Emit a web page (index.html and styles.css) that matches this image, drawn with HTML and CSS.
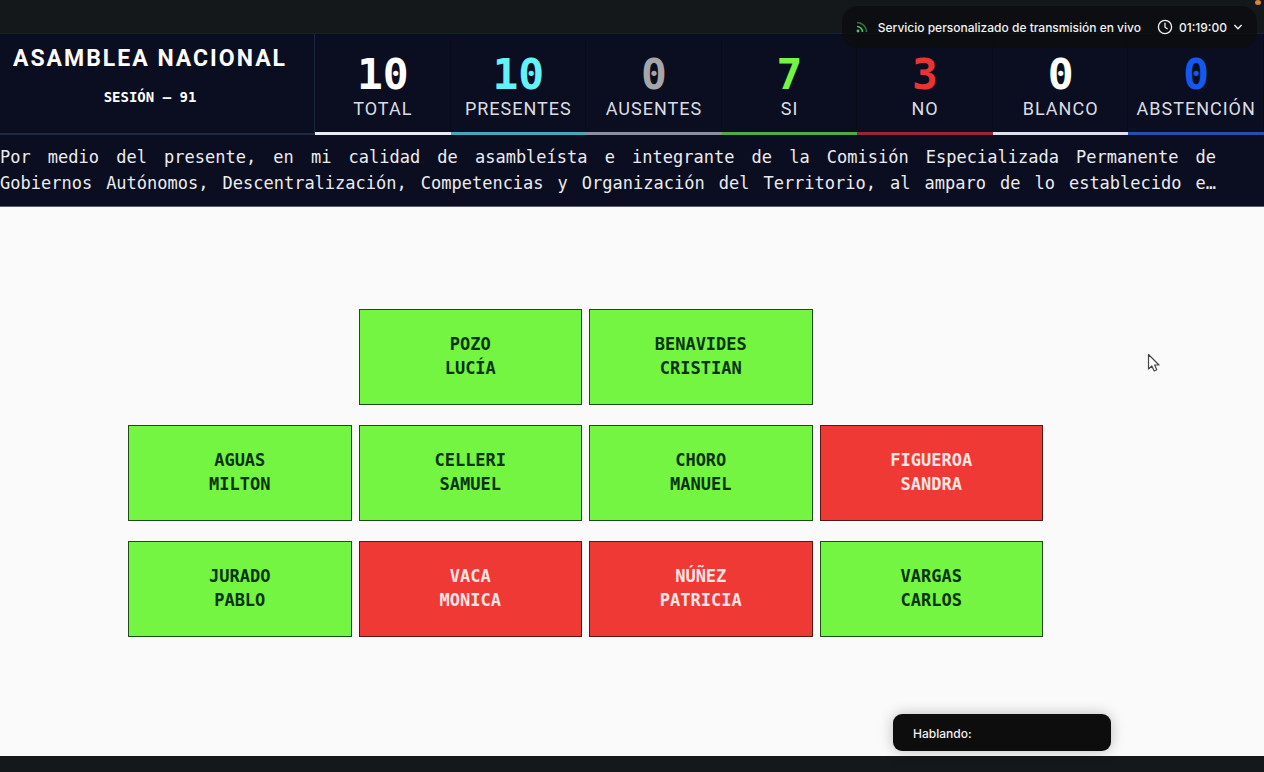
FILE: index.html
```
<!DOCTYPE html>
<html lang="es">

<head>
    <meta charset="UTF-8">
    <meta name="viewport" content="width=device-width, initial-scale=1.0">
    <title>Asamblea Nacional</title>
    <link rel="stylesheet" href="styles.css">
</head>

<body>
    <header class="header">
        <div class="top">
            <div class="title">
                <h1>ASAMBLEA NACIONAL</h1>
                <p class="session">SESIÓN – 91</p>
            </div>
            <dl class="counters">
                <div class="counter total">
                    <dt>TOTAL</dt>
                    <dd>10</dd>
                </div>
                <div class="counter present">
                    <dt>PRESENTES</dt>
                    <dd>10</dd>
                </div>
                <div class="counter absent">
                    <dt>AUSENTES</dt>
                    <dd>0</dd>
                </div>
                <div class="counter yes">
                    <dt>SI</dt>
                    <dd>7</dd>
                </div>
                <div class="counter no">
                    <dt>NO</dt>
                    <dd>3</dd>
                </div>
                <div class="counter blank">
                    <dt>BLANCO</dt>
                    <dd>0</dd>
                </div>
                <div class="counter abstention">
                    <dt>ABSTENCIÓN</dt>
                    <dd>0</dd>
                </div>
            </dl>
        </div>
        <p class="motion">
            <span class="line">Por medio del presente, en mi calidad de asambleísta e integrante de la Comisión Especializada Permanente de</span>
            <span class="line">Gobiernos Autónomos, Descentralización, Competencias y Organización del Territorio, al amparo de lo establecido e…</span>
        </p>
    </header>

    <main class="board">
        <div class="seats">
            <div class="seat second">POZO<br>LUCÍA</div>
            <div class="seat">BENAVIDES<br>CRISTIAN</div>
            <div class="seat first">AGUAS<br>MILTON</div>
            <div class="seat">CELLERI<br>SAMUEL</div>
            <div class="seat">CHORO<br>MANUEL</div>
            <div class="seat against">FIGUEROA<br>SANDRA</div>
            <div class="seat">JURADO<br>PABLO</div>
            <div class="seat against">VACA<br>MONICA</div>
            <div class="seat against">NÚÑEZ<br>PATRICIA</div>
            <div class="seat">VARGAS<br>CARLOS</div>
        </div>
    </main>

    <!-- meeting overlays -->
    <div class="live">
        <svg class="feed" width="12" height="12" viewBox="0 0 12 12" fill="none" stroke-width="1.5">
            <circle cx="2" cy="10" r="1.4" fill="#4fc26b" />
            <path d="M1 5.5A5.5 5.5 0 0 1 6.5 11" stroke="#4fc26b" />
            <path d="M1 1.5A9.5 9.5 0 0 1 10.5 11" stroke="#2b7a41" />
        </svg>
        <span class="service">Servicio personalizado de transmisión en vivo</span>
        <button class="timer" type="button">
            <svg width="16" height="16" viewBox="0 0 16 16" fill="none" stroke="currentColor" stroke-width="1.3">
                <circle cx="8" cy="8" r="6.6" />
                <path d="M8 3.8V8.2L10.6 10" />
            </svg>
            <span>01:19:00</span>
            <svg width="10" height="10" viewBox="0 0 10 10" fill="none" stroke="currentColor" stroke-width="1.4">
                <path d="M1.4 3L5 6.8L8.6 3" />
            </svg>
        </button>
    </div>
    <span class="mic"></span>
    <div class="speaking">Hablando:</div>
    <svg class="cursor" width="14" height="20" viewBox="0 0 14 20">
        <path d="M1.5 1.5V16L4.8 13L7.2 18L9.8 16.8L7.6 12H12Z" fill="#fff" stroke="#444" stroke-width="1.2" stroke-linejoin="round" />
    </svg>
</body>

</html>
```

FILE: styles.css
```
* {
    margin: 0;
    padding: 0;
    box-sizing: border-box;
}

body {
    position: relative;
    display: flex;
    flex-direction: column;
    min-height: 100vh;
    padding: 33px 0 16px;
    background-color: #14181b;
    font-family: "DejaVu Sans Mono", monospace;
}

.header {
    background-color: #0b0e20;
    color: #fff;
    border-top: 1px solid #14213a;
    border-bottom: 1px solid #5c6077;
}

.top {
    display: flex;
}

.title {
    flex: 0 0 315px;
    padding-top: 10px;
    border-right: 1px solid #1c2840;
    border-bottom: 2px solid #1d2b46;
    text-align: center;
}

.title h1 {
    font-family: Roboto, sans-serif;
    font-size: 23px;
    font-weight: 700;
    line-height: 30px;
    letter-spacing: 2px;
    white-space: nowrap;
    padding-right: 14px;
}

.session {
    margin-top: 13px;
    padding-right: 14px;
    font-size: 14px;
    font-weight: 700;
    line-height: 20px;
}

.counters {
    flex: 1;
    display: grid;
    grid-template-columns: repeat(7, minmax(0, 1fr));
}

.counter {
    display: flex;
    flex-direction: column-reverse;
    align-items: center;
    padding: 16px 0 12px;
    box-shadow: inset -1px 0 #090b19;
    border-bottom: 3px solid;
}

.counter dt {
    font-family: Roboto, sans-serif;
    font-size: 18px;
    line-height: 22px;
    letter-spacing: 1px;
    color: #dcdde3;
}

.counter dd {
    font-size: 43px;
    font-weight: 700;
    line-height: 48px;
}

.total {
    border-bottom-color: #e9eaf2;
}

.present {
    border-bottom-color: #45a9b9;
}

.present dd {
    color: #63f2f5;
}

.absent {
    border-bottom-color: #8b8f9e;
}

.absent dd {
    color: #a6a6aa;
}

.yes {
    border-bottom-color: #4fa945;
}

.yes dd {
    color: #74f541;
}

.no {
    border-bottom-color: #96273a;
}

.no dd {
    color: #ea3433;
}

.blank {
    border-bottom-color: #e0e1ed;
}

.abstention {
    border-bottom-color: #2450ad;
}

.abstention dd {
    color: #1458ee;
}

.motion {
    padding: 9px 48px 10px 0;
    font-size: 17px;
    line-height: 26px;
    color: #ebecef;
}

.line {
    display: block;
    text-align-last: justify;
    white-space: nowrap;
}

.board {
    flex: 1;
    padding: 102px 221px 0 128px;
    background-color: #fafafb;
}

.seats {
    display: grid;
    grid-template-columns: repeat(4, 1fr);
    gap: 20px 7px;
}

.seat {
    padding: 22px 0 24px;
    border: 1px solid #1d4d14;
    background-color: #74f541;
    color: #07330a;
    font-size: 17px;
    font-weight: 700;
    line-height: 24px;
    text-align: center;
}

.first {
    grid-column-start: 1;
}

.second {
    grid-column-start: 2;
}

.against {
    border-color: #5a1718;
    background-color: #ee3935;
    color: #ffe6e4;
}

.live {
    position: absolute;
    top: 6px;
    right: 7px;
    display: flex;
    align-items: center;
    height: 42px;
    padding: 0 14px;
    border-radius: 16px;
    background-color: rgba(12, 13, 15, 0.85);
    color: #f2f2f3;
    font-family: Inter, sans-serif;
    font-size: 12px;
    font-weight: 500;
}

.service {
    margin: 0 16px 0 10px;
}

.timer {
    display: flex;
    align-items: center;
    gap: 6px;
    border: none;
    background: none;
    color: inherit;
    font: inherit;
}

.mic {
    position: absolute;
    top: 0;
    right: 3px;
    width: 6px;
    height: 5px;
    border-radius: 50%;
    background-color: #d8863a;
}

.speaking {
    position: absolute;
    right: 153px;
    bottom: 21px;
    width: 218px;
    padding: 2px 20px 0;
    border-radius: 9px;
    background-color: #0d0d0e;
    box-shadow: 0 0 14px rgba(0, 0, 0, 0.25);
    color: #f2f2f3;
    font-family: Inter, sans-serif;
    font-size: 12px;
    font-weight: 500;
    line-height: 35px;
}

.cursor {
    position: absolute;
    top: 353px;
    left: 1147px;
}
```
